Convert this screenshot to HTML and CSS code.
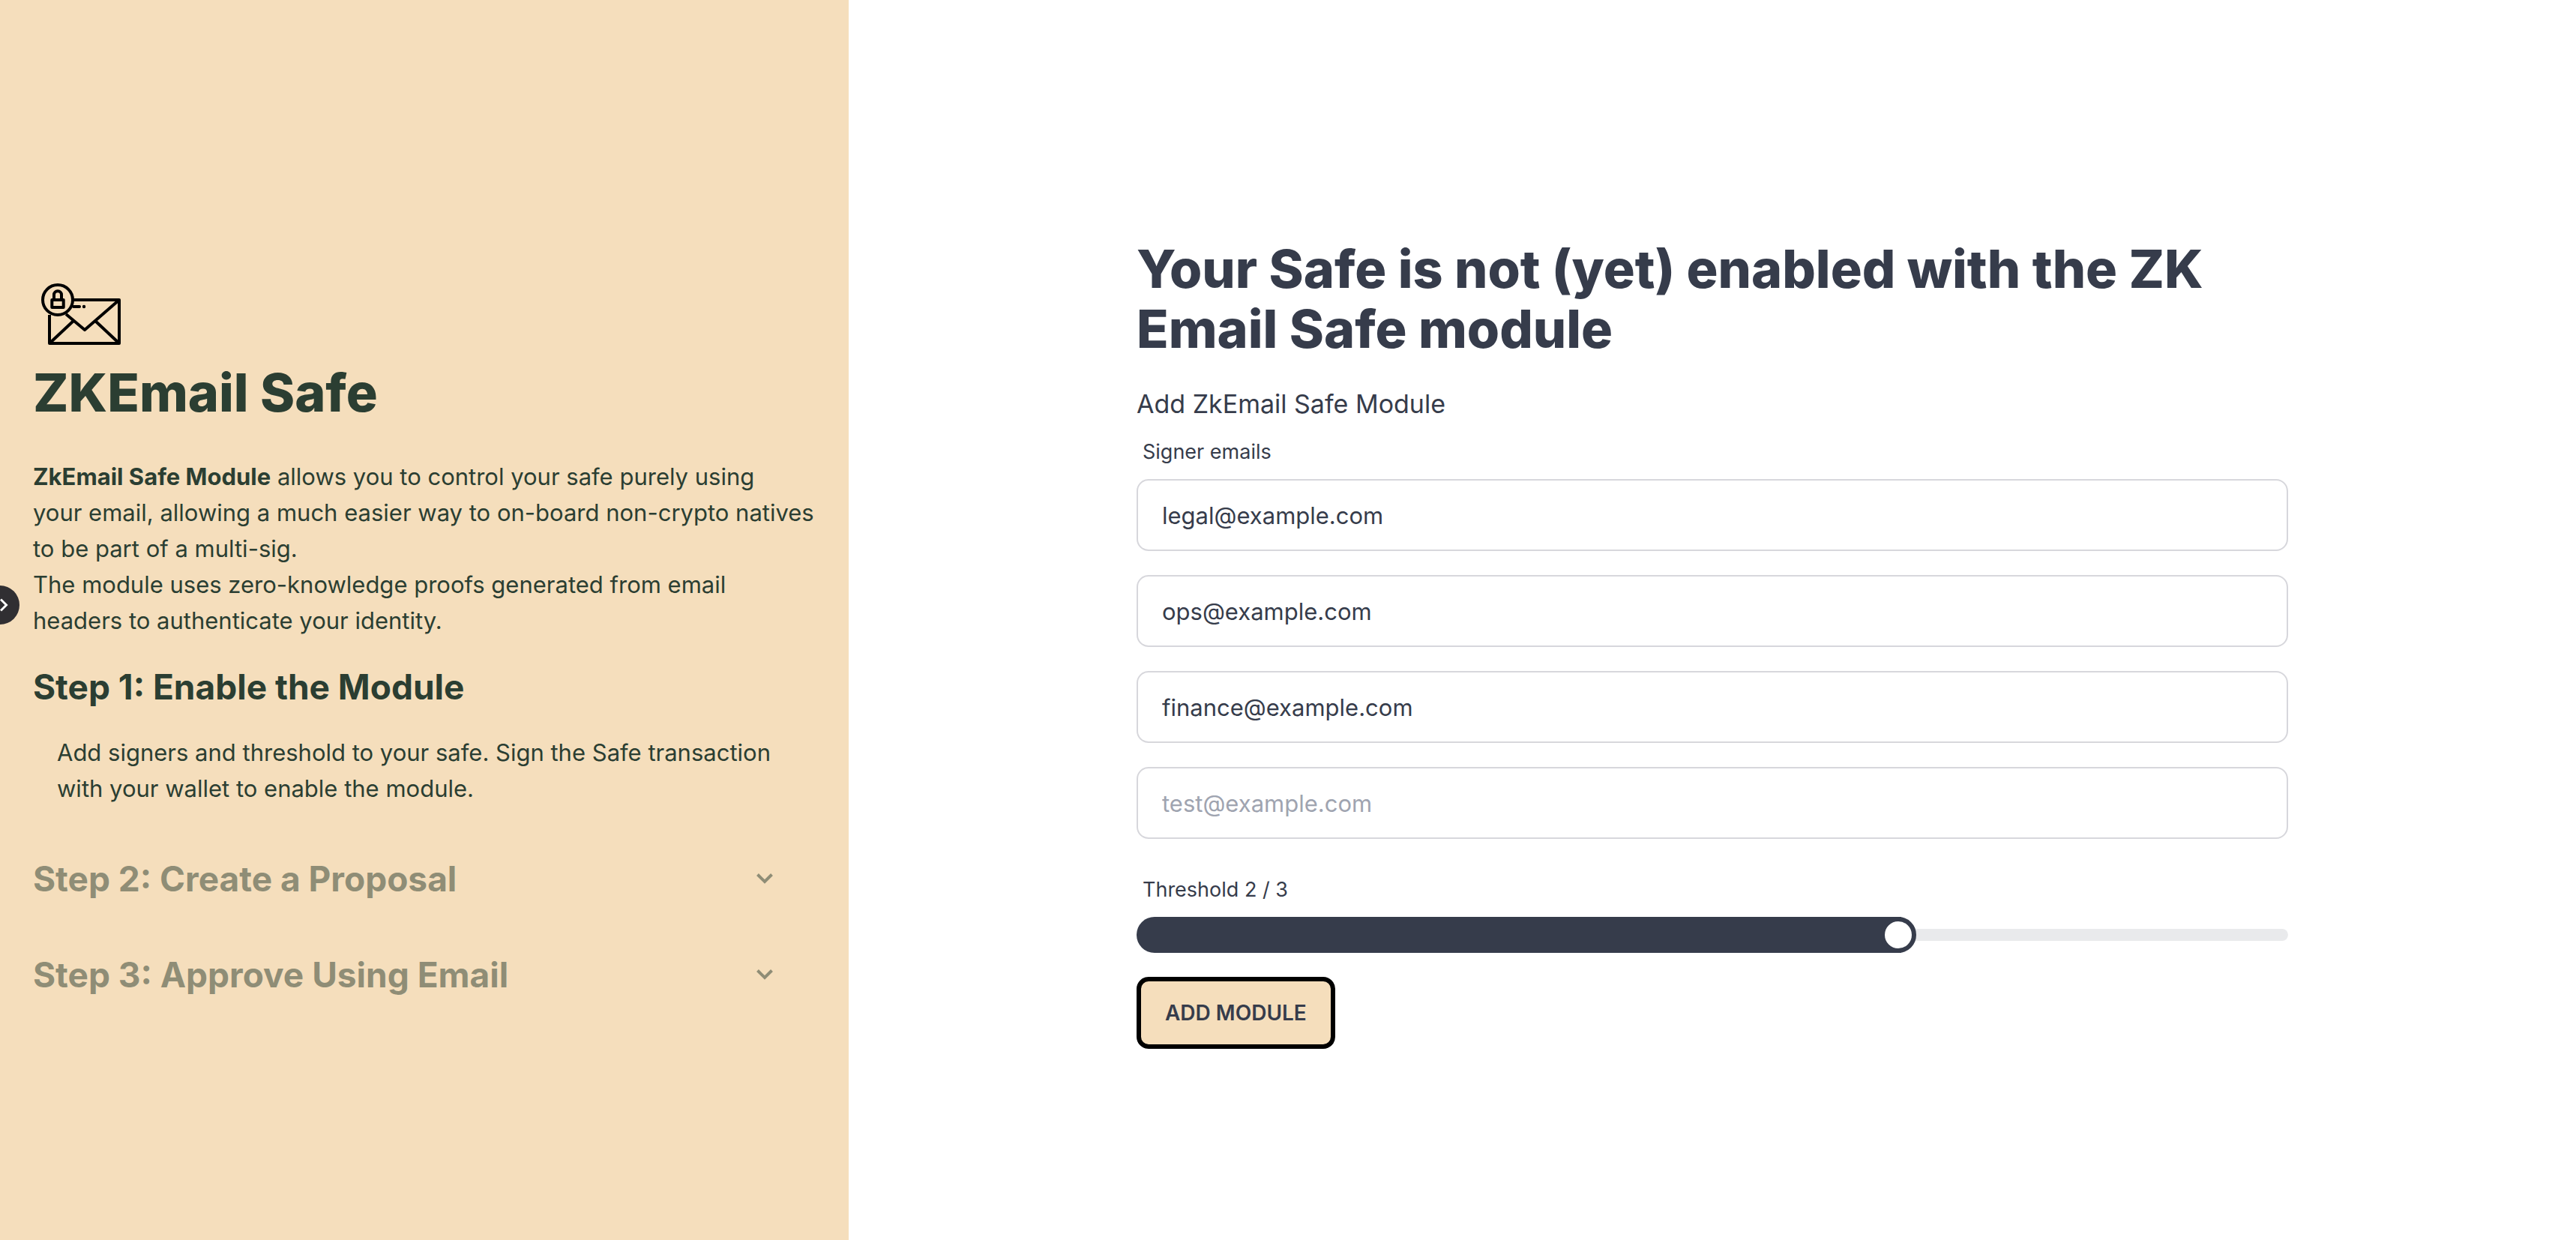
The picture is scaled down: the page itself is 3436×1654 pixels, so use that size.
FILE: index.html
```html
<!DOCTYPE html>
<html lang="en">
<head>
  <meta charset="utf-8">
  <meta name="viewport" content="width=device-width, initial-scale=1">
  <title>ZKEmail Safe</title>
  <link rel="stylesheet" href="styles.css">
</head>
<body>
  <div class="layout">
    <aside class="guide">
      <svg class="logo" viewBox="0 0 128 130" fill="none" stroke="#000" stroke-width="4" stroke-linejoin="round" aria-hidden="true">
        <path d="M54 46H115V104H22V66"/>
        <path d="M44 65L69 86L115 46M54 74L22 104M83 74L115 104"/>
        <path d="M54 55H62" stroke-linecap="round"/>
        <circle cx="68" cy="55" r="2.2" fill="#000" stroke="none"/>
        <circle cx="33" cy="46" r="20"/>
        <rect x="25.3" y="46" width="15.4" height="10"/>
        <path d="M28 45V39.300a5 5 0 0 1 10 0V45"/>
      </svg>
      <h1 class="title">ZKEmail Safe</h1>
      <p class="intro">
        <strong>ZkEmail Safe Module</strong> allows you to control your safe purely using<br>
        your email, allowing a much easier way to on-board non-crypto natives<br>
        to be part of a multi-sig.<br>
        The module uses zero-knowledge proofs generated from email<br>
        headers to authenticate your identity.
      </p>
      <section class="step">
        <h2 class="step-title">Step 1: Enable the Module</h2>
        <p class="step-text">Add signers and threshold to your safe. Sign the Safe transaction with your wallet to enable the module.</p>
      </section>
      <section class="step step-closed">
        <h2 class="step-title">
          <button class="step-toggle" type="button" aria-expanded="false">
            Step 2: Create a Proposal
            <svg class="chevron" viewBox="0 0 32 32" aria-hidden="true"><path d="M6.500 10.500L16 20L25.500 10.500"/></svg>
          </button>
        </h2>
      </section>
      <section class="step step-closed">
        <h2 class="step-title">
          <button class="step-toggle" type="button" aria-expanded="false">
            Step 3: Approve Using Email
            <svg class="chevron" viewBox="0 0 32 32" aria-hidden="true"><path d="M6.500 10.500L16 20L25.500 10.500"/></svg>
          </button>
        </h2>
      </section>
    </aside>

    <main class="content">
      <form class="module-form">
        <h1 class="title form-title">Your Safe is not (yet) enabled with the ZK Email Safe module</h1>
        <p class="form-subtitle">Add ZkEmail Safe Module</p>
        <label class="field-label" for="signer-1">Signer emails</label>
        <div class="fields">
          <input class="field" id="signer-1" type="email" value="legal@example.com">
          <input class="field" type="email" value="ops@example.com" aria-label="Signer email 2">
          <input class="field" type="email" value="finance@example.com" aria-label="Signer email 3">
          <input class="field" type="email" placeholder="test@example.com" aria-label="New signer email">
        </div>
        <label class="field-label threshold-label" for="threshold">Threshold 2 / 3</label>
        <input class="range" id="threshold" type="range" min="0" max="3" value="2">
        <button class="submit" type="button">ADD MODULE</button>
      </form>
    </main>
  </div>

  <button class="drawer-toggle" type="button" aria-label="Open panel">
    <svg class="drawer-icon" viewBox="0 0 52 52" aria-hidden="true"><path d="M27 18.500L34.500 26L27 33.500"/></svg>
  </button>
</body>
</html>
```
FILE: styles.css
```css
:root {
  --sand: #f5debc;
  --forest: #2b3e32;
  --ink: #363c4b;
}

* {
  box-sizing: border-box;
}

body {
  position: relative;
  margin: 0;
  overflow-x: hidden;
  font-family: Inter, "Liberation Sans", sans-serif;
  font-size: 31px;
  line-height: 48px;
  color: var(--ink);
  background: #fff;
}

h1, h2, p {
  margin: 0;
}

button, input {
  margin: 0;
  font: inherit;
  color: inherit;
}

.layout {
  display: grid;
  grid-template-columns: 283fr 576fr;
  min-height: 100vh;
}

.title {
  font-size: 70px;
  font-weight: 800;
  line-height: 80px;
}

/* Guide panel */
.guide {
  display: flex;
  flex-direction: column;
  justify-content: center;
  padding: 32px 40px 0 44px;
  color: var(--forest);
  background: var(--sand);
}

.logo {
  width: 128px;
  height: 130px;
}

.intro {
  margin: 48px 0 32px;
}

.step-title {
  font-size: 46px;
  font-weight: 700;
  line-height: 64px;
}

.step-text {
  padding: 32px 40px 0 32px;
}

.step-closed {
  margin-top: 64px;
  opacity: 0.5;
}

.step-toggle {
  display: flex;
  align-items: center;
  justify-content: space-between;
  width: 100%;
  padding: 0 56px 0 0;
  border: 0;
  background: none;
  text-align: left;
}

.chevron {
  width: 32px;
  height: 32px;
  fill: none;
  stroke: currentColor;
  stroke-width: 4;
}

/* Module form */
.content {
  display: flex;
  align-items: center;
  justify-content: center;
  padding: 64px 32px 0;
}

.module-form {
  width: 100%;
  max-width: 1536px;
}

.form-title {
  margin-bottom: 32px;
}

.form-subtitle {
  font-size: 34px;
  line-height: 56px;
}

.field-label {
  display: block;
  padding: 16px 8px;
  font-size: 27px;
  line-height: 40px;
}

.fields {
  display: grid;
  gap: 32px;
}

.field {
  width: 100%;
  height: 96px;
  padding: 0 32px;
  border: 2px solid #d7d7dc;
  border-radius: 16px;
  background: #fff;
}

.field::placeholder {
  color: #9fa4b0;
  opacity: 1;
}

.threshold-label {
  margin-top: 32px;
}

.range {
  display: block;
  width: 100%;
  height: 48px;
  overflow: hidden;
  border-radius: 24px;
  background: transparent;
  appearance: none;
}

.range::-webkit-slider-runnable-track {
  height: 16px;
  border-radius: 8px;
  background: #e9eaec;
}

/* The shadow paints the filled part of the bar, clipped by the input */
.range::-webkit-slider-thumb {
  width: 48px;
  height: 48px;
  margin-top: -16px;
  border: 6px solid var(--ink);
  border-radius: 50%;
  background: #fff;
  box-shadow: calc(-100vw - 20px) 0 0 100vw var(--ink);
  appearance: none;
}

.submit {
  display: block;
  height: 96px;
  margin-top: 32px;
  padding: 0 32px;
  border: 6px solid #000;
  border-radius: 16px;
  font-size: 28px;
  font-weight: 600;
  background: var(--sand);
}

/* Round tab on the window's left edge */
.drawer-toggle {
  position: absolute;
  top: calc(50% - 46px);
  left: -26px;
  width: 52px;
  height: 52px;
  padding: 0;
  border: 0;
  border-radius: 50%;
  background: #302f32;
}

.drawer-icon {
  display: block;
  fill: none;
  stroke: #fff;
  stroke-width: 3;
}
```
